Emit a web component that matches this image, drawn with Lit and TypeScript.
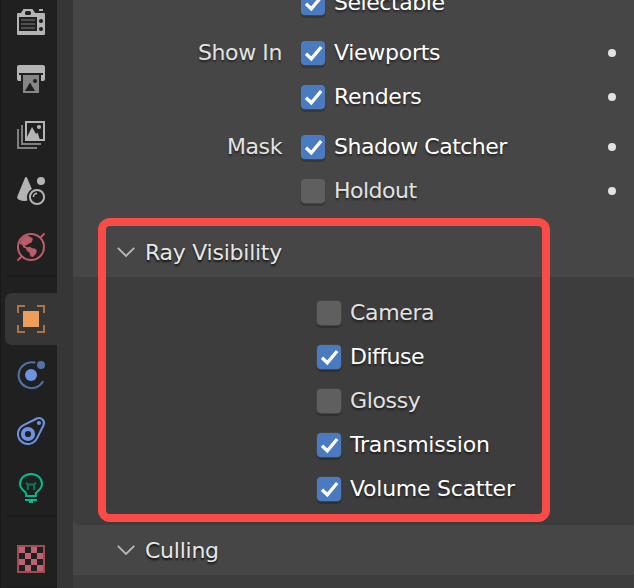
import { LitElement, html, svg, css } from "lit";
import { customElement, property } from "lit/decorators.js";

const tick = svg`<path d="M5 12.8 L10.3 17.8 L20.2 6" fill="none" stroke="#fff" stroke-width="3.3"/>`;

const icons: Record<string, unknown> = {
  render: svg`
    <path fill="#b4b4b4" d="M1 4H4L6.5 0H15.5L18 4H27Q28 4 28 5V25Q28 26 27 26H1Q0 26 0 25V5Q0 4 1 4Z"/>
    <rect x="22" y="0" width="4" height="2" rx=".6" fill="#b4b4b4"/>
    <rect x="8" y="2" width="6" height="4" rx="1.5" fill="#202020"/>
    <rect x="2" y="8" width="18" height="14" fill="#202020"/>
    <path d="M4 11H18M4 15H18M4 19H18" stroke="#505050" stroke-width="2"/>
    <circle cx="24" cy="12" r="2.1" fill="#202020"/><circle cx="24" cy="20" r="2.1" fill="#202020"/>`,
  output: svg`
    <path fill="#b4b4b4" d="M2 0H26Q28 0 28 2V14Q28 16 26 16H24V10H26V8H2V10H4V16H2Q0 16 0 14V2Q0 0 2 0Z"/>
    <path fill="#868686" d="M6 10H22V28H6Z"/>
    <circle cx="18" cy="16" r="2.1" fill="#202020"/><path d="M8 26L13 17.5L18 26Z" fill="#202020"/>`,
  layers: svg`
    <path d="M9 1H27V19H9Z" fill="none" stroke="#b4b4b4" stroke-width="2"/>
    <path d="M10 19V16L15 6L19 13L20.5 11.5L23 19Z" fill="#b4b4b4"/><circle cx="22" cy="6" r="2.1" fill="#b4b4b4"/>
    <path d="M5 4V23H24M1 8V27H20" fill="none" stroke="#808080" stroke-width="2"/>`,
  scene: svg`
    <path d="M9 0Q8.3 0 7.8 1.2L.5 19Q-.6 21.5 2 22.8Q4.5 24 8 24L10.3 23.5A9.8 9.8 0 0 1 14.8 12L10.3 1.2Q9.8 0 9 0Z" fill="#b4b4b4"/>
    <circle cx="24" cy="4" r="4" fill="#b4b4b4"/>
    <circle cx="20" cy="20" r="7.1" fill="none" stroke="#b4b4b4" stroke-width="2"/>
    <path d="M16.4 20A3.6 3.6 0 0 1 20 16.4" fill="none" stroke="#b4b4b4" stroke-width="1.6"/>`,
  world: svg`
    <circle cx="14" cy="14" r="13" fill="none" stroke="#ba5c69" stroke-width="2"/>
    <path d="M23.7 4.3L27.6.4M.4 27.6L4.3 23.7" stroke="#ba5c69" stroke-width="2"/>
    <path fill="#ba5c69" d="M2.5 11L5 5.5L10 2.5L14.5 4.5L16 6L14.5 9.5L11 11L9.5 12.5L8 12.2L8.6 13.8L10.5 14.2L13 13.8L15 15.2L18 15.5L20 18L18.8 21L16 24L13.4 23.2L12.5 19.8L9.6 17.6L9 15.6L6.5 14.5L4.8 11.5Z"/>`,
  object: svg`
    <path d="M1 8V1H8M20 1H27V8M27 20V27H20M8 27H1V20" fill="none" stroke="#aa7543" stroke-width="2"/>
    <rect x="6" y="6" width="16" height="16" rx=".6" fill="#ed9e5c"/>`,
  physics: svg`
    <path d="M17.6 1.5A13 13 0 1 0 25.8 20.8" fill="none" stroke="#5271ac" stroke-width="2" stroke-linecap="round"/>
    <circle cx="14" cy="14" r="6" fill="#6d93e0"/><circle cx="24" cy="4" r="4" fill="#5271ac"/>`,
  constraint: svg`
    <path d="M6.57 8.04L19.8 1.52A5 5 0 0 1 26.5 8.2L19.96 21.43A10 10 0 1 1 6.57 8.04Z" fill="none" stroke="#6d93e0" stroke-width="2"/>
    <circle cx="11" cy="17" r="5.1" fill="none" stroke="#6d93e0" stroke-width="4"/>
    <circle cx="22" cy="6" r="2.1" fill="#6d93e0"/>`,
  data: svg`
    <path d="M9.2 23V20.5C7.5 17.8 3 16 3 11A11 10.1 0 0 1 25 11C25 16 20.5 17.8 18.8 20.5V23Z" fill="none" stroke="#00bd8b" stroke-width="2"/>
    <path d="M8 26H20V28H16V30H12V28H8Z" fill="#00bd8b"/>
    <path d="M9 9.8L11 11.5H17L19 9.8M10.8 11V17M17.2 11V17" fill="none" stroke="#087a5c" stroke-width="1.9"/>`,
  texture: svg`
    <rect x="1" y="1" width="26" height="26" fill="none" stroke="#9e4c58" stroke-width="2"/>
    <path fill="#be6470" d="M2 2h6v6h-6zM14 2h6v6h-6zM8 8h6v6h-6zM20 8h6v6h-6zM2 14h6v6h-6zM14 14h6v6h-6zM8 20h6v6h-6zM20 20h6v6h-6z"/>`,
};

@customElement("tab-strip")
class TabStrip extends LitElement {
  static styles = css`
    :host { display: block; box-sizing: border-box; width: 57px; height: 588px; overflow: hidden; background: #202020; border-left: 1px solid #191919; }
    .strip { display: flex; flex-direction: column; margin-top: -3px; }
    .group { display: flex; flex-direction: column; gap: 4px; margin-left: 4px; padding-bottom: 2px; margin-bottom: 16px; border-bottom: 2px solid #1c1c1c; border-bottom-left-radius: 7px; }
    .tab { display: flex; flex: none; align-items: center; box-sizing: border-box; height: 52px; padding-left: 12px; border-radius: 7px 0 0 7px; }
    .active { background: #363636; }
    svg { display: block; width: 28px; height: 28px; overflow: visible; }
  `;
  render() {
    const groups = [["render", "output", "layers", "scene", "world"], ["object", "physics", "constraint", "data"], ["texture"]];
    return html`<div class="strip">${groups.map(g => html`<div class="group">${g.map(n => html`
      <div class="tab ${n === "object" ? "active" : ""}"><svg viewBox="0 0 28 28">${icons[n]}</svg></div>`)}</div>`)}</div>`;
  }
}

@customElement("check-row")
class CheckRow extends LitElement {
  @property() label = "";
  @property() heading = "";
  @property({ type: Number }) tracking = -0.35;
  @property({ type: Boolean }) checked = false;
  @property({ type: Boolean }) dot = false;
  static styles = css`
    :host { display: flex; align-items: center; height: 44px; flex: none; color: #e2e2e2; text-shadow: 0 2px 2px rgba(0,0,0,.5); white-space: nowrap; }
    .heading { width: var(--heading-width, 209px); margin-right: 19px; text-align: right; flex: none; letter-spacing: -.4px; }
    .box { width: 24px; height: 24px; flex: none; border-radius: 4px; background: #5f5f5f; box-shadow: 0 0 0 1px rgba(70,70,70,.9), 0 2px 0 1px rgba(0,0,0,.2); }
    .on { background: #4a7bc1; }
    .box svg { display: block; width: 24px; height: 24px; }
    .label { margin-left: 9px; flex: 1; }
    .bright { color: #fff; }
    .dot { width: 8px; height: 8px; margin-right: 18px; border-radius: 50%; background: #e2e2e2; }
  `;
  render() {
    return html`<span class="heading">${this.heading}</span>
      <span class="box ${this.checked ? "on" : ""}">${this.checked ? html`<svg viewBox="0 0 24 24">${tick}</svg>` : ""}</span>
      <span class="label ${this.checked ? "bright" : ""}" style="letter-spacing:${this.tracking}px">${this.label}</span>
      ${this.dot ? html`<span class="dot"></span>` : ""}`;
  }
}

@customElement("panel-header")
class PanelHeader extends LitElement {
  @property() label = "";
  static styles = css`
    :host { display: flex; align-items: center; flex: none; height: 50px; padding-left: 44px; background: #464646; color: #e6e6e6; letter-spacing: -.25px; text-shadow: 0 2px 2px rgba(0,0,0,.75); }
    svg { width: 18px; height: 10px; margin-right: 10px; }
    .title { padding-top: 1px; }
  `;
  render() {
    return html`<svg viewBox="0 0 18 10"><path d="M.8.8L9 9L17.2.8" fill="none" stroke="#b8b8b8" stroke-width="1.8"/></svg><span class="title">${this.label}</span>`;
  }
}

@customElement("app-root")
class AppRoot extends LitElement {
  static styles = css`
    :host { display: flex; position: relative; width: 634px; height: 588px; overflow: hidden; background: #363636; font: 22px/26px "DejaVu Sans", sans-serif; }
    .panel { display: flex; flex-direction: column; width: 561px; margin-left: 16px; background: #464646; overflow: hidden; }
    .visibility { display: flex; flex-direction: column; height: 227px; flex: none; }
    .first { margin-top: -19px; margin-bottom: 6px; }
    .mask { margin-top: 6px; }
    .body { box-sizing: border-box; height: 248px; flex: none; padding-top: 14px; background: #3d3d3d; border-bottom-left-radius: 7px; --heading-width: 225px; }
    .next { flex: 1; background: #3d3d3d; }
    .highlight { position: absolute; box-sizing: border-box; left: 98px; top: 218px; width: 452px; height: 304px; border: 8px solid #f94b47; border-radius: 12px; }
  `;
  render() {
    return html`<tab-strip></tab-strip>
      <main class="panel">
        <section class="visibility">
          <check-row class="first" label="Selectable" tracking="-0.45" checked></check-row>
          <check-row heading="Show In" label="Viewports" tracking="-0.28" checked dot></check-row>
          <check-row label="Renders" checked dot></check-row>
          <check-row class="mask" heading="Mask" label="Shadow Catcher" tracking="-0.5" checked dot></check-row>
          <check-row label="Holdout" tracking="-0.5" dot></check-row>
        </section>
        <panel-header label="Ray Visibility"></panel-header>
        <section class="body">
          <check-row label="Camera"></check-row>
          <check-row label="Diffuse" tracking="-0.5" checked></check-row>
          <check-row label="Glossy"></check-row>
          <check-row label="Transmission" tracking="-0.2" checked></check-row>
          <check-row label="Volume Scatter" tracking="-0.25" checked></check-row>
        </section>
        <panel-header label="Culling"></panel-header>
        <section class="next"></section>
      </main>
      <div class="highlight"></div>`;
  }
}
